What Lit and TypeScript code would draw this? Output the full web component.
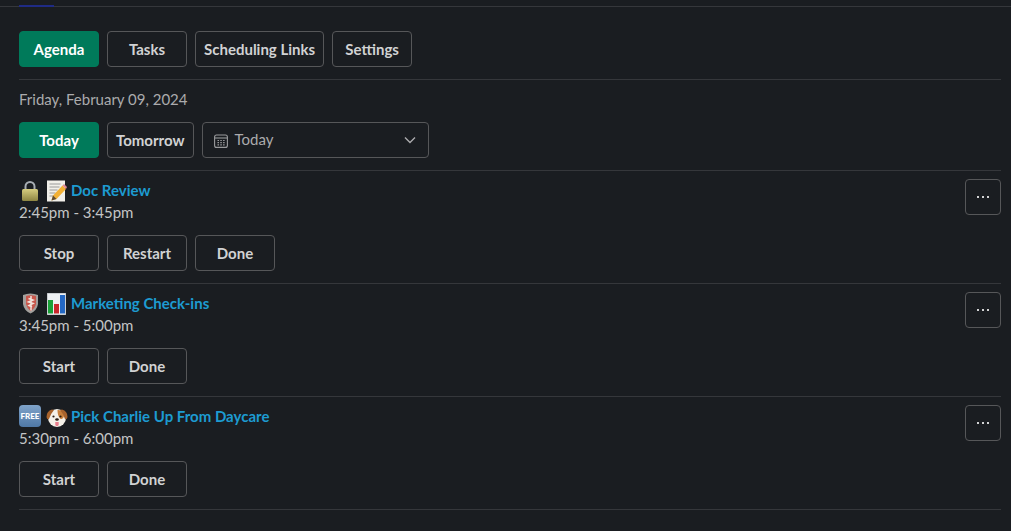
import { LitElement, html, css, svg } from "lit";
import { customElement } from "lit/decorators.js";

const lock = html`<svg class="emoji" viewBox="0 0 22 22"><defs><linearGradient id="lk" x1="0" y1="0" x2="0" y2="1"><stop offset="0" stop-color="#d6cd80"/><stop offset="1" stop-color="#8d8542"/></linearGradient></defs><path d="M6.500 10V6.500a4.500 4.500 0 0 1 9 0V10" fill="none" stroke="#a7adb3" stroke-width="2"/><rect x="3" y="9" width="16" height="12" rx="1.500" fill="url(#lk)"/></svg>`;
const memo = html`<svg class="emoji" viewBox="0 0 22 22"><rect x="1" y="0.500" width="18" height="21" fill="#f1efe9"/><path d="M3.500 4h11M3.500 7h10M3.500 10h8M3.500 13h6M3.500 16h4" stroke="#9b9b9b" stroke-width="1"/><path d="M5.500 20.500l1.500-5L16.500 5.500l3.500 3.500L10.500 19z" fill="#f2b035"/><path d="M16.500 5.500l1.500-1.500 3 3L20 9z" fill="#e08a95"/><path d="M5.500 20.500l1.500-5 3.500 3.500z" fill="#5c4a36"/></svg>`;
const shield = html`<svg class="emoji" viewBox="0 0 22 22"><path d="M4 2Q11.500 -1 19 2V11Q18 17.500 11.500 20.500 5 17.500 4 11z" fill="#a3a09d"/><path d="M7 3Q11.500 1.500 17 3V11Q16 15.500 11.500 18 8 15.500 7 11z" fill="#c9574c"/><path d="M12 3V17.500M9.500 5.500l4.500 1.500-4.500 2 4.500 1.500-4 2 3 1.500" fill="none" stroke="#f3e4dc" stroke-width="1.500"/></svg>`;
const chart = html`<svg class="emoji" viewBox="0 0 22 22"><rect x="1" y="0" width="19" height="22" fill="#a9adb1"/><rect x="1.500" y="0.500" width="18" height="21" fill="#eef1f3"/><rect x="2" y="7" width="5" height="13.500" fill="#1aa038"/><rect x="8" y="11" width="5" height="9.500" fill="#c8272b"/><rect x="14" y="2" width="5" height="18.500" fill="#2468c4"/></svg>`;
const free = html`<span class="free">FREE</span>`;
const dog = html`<svg class="emoji" viewBox="0 0 22 22"><ellipse cx="11" cy="12" rx="9" ry="9" fill="#f4f0e8"/><path d="M11.500 4Q17.500 3.500 18 10 17 14.500 14 12.500 11.500 9.500 11.500 4z" fill="#c8803c"/><path d="M6 3.500Q0.500 5 0.500 11 1 14 3 13 4.500 8 8 4z" fill="#a8632c"/><path d="M16 3.500Q21.500 5 21.500 11 21 14 19 13 17.500 8 14 4z" fill="#a8632c"/><circle cx="7.500" cy="10.500" r="1.100" fill="#2a1d14"/><circle cx="14.500" cy="10.500" r="1.100" fill="#2a1d14"/><ellipse cx="11" cy="13.500" rx="1.800" ry="1.300" fill="#2a1d14"/><path d="M9.300 16h3.400v2.500a1.700 1.700 0 0 1-3.400 0z" fill="#ea7e8e"/></svg>`;

const calendar = svg`<svg class="cal" viewBox="0 0 14 14"><rect x=".6" y="1" width="12.800" height="12.400" rx="2" fill="none" stroke="#9a9b9d" stroke-width="1.100"/><path d="M1 4h12" stroke="#9a9b9d" stroke-width="1.100"/><path d="M3.500 6.500h1.500M6.300 6.500h1.500M9.100 6.500h1.500M3.500 8.700h1.500M6.300 8.700h1.500M9.100 8.700h1.500M3.500 10.900h1.500M6.300 10.900h1.500M9.100 10.900h1.500" stroke="#9a9b9d" stroke-width="1.200"/></svg>`;

interface Item { icons: unknown[]; title: string; time: string; actions: string[]; }

const items: Item[] = [
  { icons: [lock, memo], title: "Doc Review", time: "2:45pm - 3:45pm", actions: ["Stop", "Restart", "Done"] },
  { icons: [shield, chart], title: "Marketing Check-ins", time: "3:45pm - 5:00pm", actions: ["Start", "Done"] },
  { icons: [free, dog], title: "Pick Charlie Up From Daycare", time: "5:30pm - 6:00pm", actions: ["Start", "Done"] },
];

@customElement("app-root")
export class AppRoot extends LitElement {
  static styles = css`
    :host {
      display: block;
      height: 531px;
      box-sizing: border-box;
      background: #1a1d21;
      color: #d1d2d3;
      font-family: Lato, "Open Sans", sans-serif;
      font-size: 15px;
      overflow: hidden;
    }
    .top { height: 7px; border-bottom: 1px solid #35373b; box-sizing: border-box; padding: 5px 0 0 19px; }
    .tab-mark { width: 35px; height: 2px; background: #1f2b85; }
    .page { padding: 0 10px 0 19px; }
    .row { display: flex; gap: 8px; }
    .nav { padding: 24px 0 12px; border-bottom: 1px solid #35373b; }
    .btn {
      box-sizing: border-box;
      height: 36px;
      min-width: 80px;
      padding: 0 8px;
      display: flex;
      align-items: center;
      justify-content: center;
      border: 1px solid #565759;
      border-radius: 4px;
      color: #d1d2d3;
      font: 700 15px/1 Lato, sans-serif;
      white-space: nowrap;
    }
    .btn.primary { background: #007a5a; border-color: #007a5a; color: #fff; }
    .date { height: 38px; padding-bottom: 4px; display: flex; align-items: center; color: #ababad; }
    .pick { padding-bottom: 12px; border-bottom: 1px solid #35373b; }
    .select {
      box-sizing: border-box;
      width: 227px;
      height: 36px;
      display: flex;
      align-items: center;
      padding: 0 12px 0 11px;
      border: 1px solid #565759;
      border-radius: 4px;
      color: #ababad;
    }
    .cal { width: 14px; height: 14px; margin-right: 7px; margin-top: 2px; }
    .select span { flex: 1; padding-bottom: 2px; }
    .chev { width: 12px; height: 8px; }
    .item {
      display: flex;
      justify-content: space-between;
      height: 113px;
      box-sizing: border-box;
      border-bottom: 1px solid #35373b;
    }
    .title-line { display: flex; align-items: center; gap: 3px; height: 22px; margin-top: 9px; }
    .emoji { width: 22px; height: 22px; display: block; flex: none; }
    .emoji-wrap { display: flex; gap: 5px; }
    .free {
      box-sizing: border-box;
      width: 22px;
      height: 22px;
      margin-top: -1px;
      border-radius: 4px;
      background: linear-gradient(#7fa3c9, #4f78a6);
      color: #fff;
      font: 900 8px/22px Lato, sans-serif;
      text-align: center;
      flex: none;
    }
    .title { color: #1d9bd1; font-weight: 700; font-size: 15px; line-height: 20px; padding-bottom: 2px; }
    .time { height: 20px; padding-bottom: 2px; line-height: 20px; color: #c4c5c6; }
    .actions { margin-top: 11px; }
    .more {
      box-sizing: border-box;
      width: 36px;
      height: 36px;
      margin-top: 8px;
      border: 1px solid #565759;
      border-radius: 4px;
      display: flex;
      align-items: center;
      justify-content: center;
      gap: 3px;
    }
    .more i { width: 2px; height: 2px; background: #d1d2d3; display: block; }
  `;

  render() {
    return html`
      <div class="top"><div class="tab-mark"></div></div>
      <div class="page">
        <div class="row nav">
          <div class="btn primary">Agenda</div>
          <div class="btn">Tasks</div>
          <div class="btn">Scheduling Links</div>
          <div class="btn">Settings</div>
        </div>
        <div class="date">Friday, February 09, 2024</div>
        <div class="row pick">
          <div class="btn primary">Today</div>
          <div class="btn">Tomorrow</div>
          <div class="select">
            ${calendar}<span>Today</span>
            <svg class="chev" viewBox="0 0 12 8"><path d="M1 1.500l5 5 5-5" fill="none" stroke="#ababad" stroke-width="1.400"/></svg>
          </div>
        </div>
        ${items.map(
          (it) => html`
            <div class="item">
              <div>
                <div class="title-line">
                  <div class="emoji-wrap">${it.icons}</div>
                  <span class="title">${it.title}</span>
                </div>
                <div class="time">${it.time}</div>
                <div class="row actions">${it.actions.map((a) => html`<div class="btn">${a}</div>`)}</div>
              </div>
              <div class="more"><i></i><i></i><i></i></div>
            </div>
          `
        )}
      </div>
    `;
  }
}
